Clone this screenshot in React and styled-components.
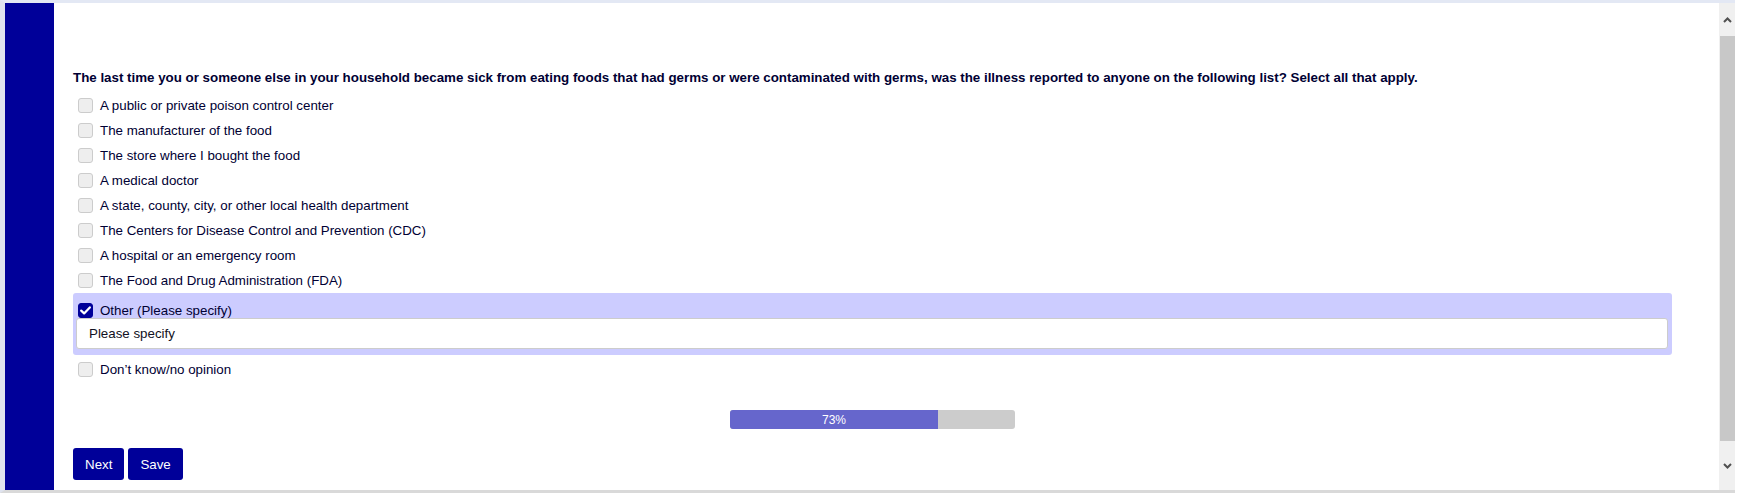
import React from "react";
import styled, { createGlobalStyle } from "styled-components";

const Global = createGlobalStyle`
  html, body { margin: 0; padding: 0; background: #ffffff; }
  body { font-family: "Liberation Sans", Arial, sans-serif; }
  * { box-sizing: border-box; }
`;

const Frame = styled.div`
  width: 1735px;
  height: 493px;
  border-left: 5px solid #dfe3ef;
  border-top: 3px solid #e3e8f4;
  border-bottom: 3px solid #d9d9d9;
  display: flex;
  background: #ffffff;
`;

const Sidebar = styled.div`
  width: 49px;
  flex: none;
  background: #000099;
`;

const Content = styled.div`
  flex: 1;
  min-width: 0;
  padding: 67px 47px 10px 19px;
  display: flex;
  flex-direction: column;
`;

const Question = styled.div`
  font-size: 13.33px;
  line-height: 15px;
  font-weight: bold;
  color: #000033;
  margin-bottom: 8px;
`;

const Options = styled.div`
  display: flex;
  flex-direction: column;
`;

const Row = styled.label`
  display: flex;
  align-items: center;
  height: 25px;
  padding-left: 5px;
  font-size: 13.33px;
  color: #000033;
  cursor: pointer;
`;

const Box = styled.span`
  width: 15px;
  height: 15px;
  flex: none;
  border-radius: 3px;
  border: 1px solid ${(p) => (p.$checked ? "#000099" : "#cccccc")};
  background: ${(p) => (p.$checked ? "#000099" : "#eeeeee")};
  margin-right: 7px;
  display: flex;
  align-items: center;
  justify-content: center;
`;

const Highlight = styled.div`
  background: #ccccff;
  border-radius: 3px;
  padding: 10px 4px 6px 3px;
  margin-bottom: 2px;
`;

const HiRow = styled.label`
  display: flex;
  align-items: center;
  height: 15px;
  padding-left: 2px;
  font-size: 13.33px;
  color: #000033;
`;

const SpecifyInput = styled.input`
  display: block;
  width: 100%;
  height: 31px;
  border: 1px solid #cccccc;
  border-radius: 3px;
  background: #ffffff;
  padding: 0 12px;
  font-family: "Liberation Sans", Arial, sans-serif;
  font-size: 13.33px;
  color: #000033;
  outline: none;
  &::placeholder { color: #111122; opacity: 1; }
`;

const ProgressWrap = styled.div`
  display: flex;
  justify-content: center;
  margin-top: 28px;
`;

const Track = styled.div`
  width: 285px;
  height: 19px;
  background: #cccccc;
  border-radius: 3px;
  overflow: hidden;
  display: flex;
`;

const Fill = styled.div`
  height: 100%;
  background: #6666cc;
  color: #ffffff;
  font-size: 12px;
  display: flex;
  align-items: center;
  justify-content: center;
`;

const Buttons = styled.div`
  display: flex;
  gap: 4px;
  margin-top: 19px;
`;

const Button = styled.button`
  height: 32px;
  padding: 0 12px;
  border: none;
  border-radius: 3px;
  background: #000099;
  color: #ffffff;
  font-family: "Liberation Sans", Arial, sans-serif;
  font-size: 13.33px;
  cursor: pointer;
`;

const Scrollbar = styled.div`
  width: 16px;
  flex: none;
  background: #f0f0f0;
  display: flex;
  flex-direction: column;
  align-items: stretch;
`;

const Arrow = styled.div`
  height: ${(p) => p.$h}px;
  display: flex;
  align-items: center;
  justify-content: center;
  flex: none;
`;

const Thumb = styled.div`
  height: 405px;
  margin-left: 1px;
  background: #c8c8c8;
  flex: none;
`;

const Spacer = styled.div`
  flex: 1;
  display: flex;
  align-items: center;
  justify-content: center;
`;

const Check = () => (
  <svg width="11" height="9" viewBox="0 0 11 9">
    <path d="M1.2 4.6 L4.1 7.4 L9.8 1.4" fill="none" stroke="#ffffff" strokeWidth="2.2" strokeLinecap="round" strokeLinejoin="round" />
  </svg>
);

const Chevron = ({ down }) => (
  <svg width="9" height="6" viewBox="0 0 9 6">
    <path d={down ? "M1 1 L4.5 4.5 L8 1" : "M1 5 L4.5 1.5 L8 5"} fill="none" stroke="#505050" strokeWidth="2" />
  </svg>
);

const options = [
  "A public or private poison control center",
  "The manufacturer of the food",
  "The store where I bought the food",
  "A medical doctor",
  "A state, county, city, or other local health department",
  "The Centers for Disease Control and Prevention (CDC)",
  "A hospital or an emergency room",
  "The Food and Drug Administration (FDA)",
];

export default function App() {
  const progress = 73;
  return (
    <>
      <Global />
      <Frame>
        <Sidebar />
        <Content>
          <Question>
            The last time you or someone else in your household became sick from eating foods that had germs or were contaminated with germs, was the illness reported to anyone on the following list? Select all that apply.
          </Question>
          <Options>
            {options.map((o) => (
              <Row key={o}>
                <Box />
                {o}
              </Row>
            ))}
            <Highlight>
              <HiRow>
                <Box $checked>
                  <Check />
                </Box>
                Other (Please specify)
              </HiRow>
              <SpecifyInput placeholder="Please specify" />
            </Highlight>
            <Row>
              <Box />
              Don’t know/no opinion
            </Row>
          </Options>
          <ProgressWrap>
            <Track>
              <Fill style={{ width: `${progress}%` }}>{progress}%</Fill>
            </Track>
          </ProgressWrap>
          <Buttons>
            <Button>Next</Button>
            <Button>Save</Button>
          </Buttons>
        </Content>
        <Scrollbar>
          <Arrow $h={33}>
            <Chevron />
          </Arrow>
          <Thumb />
          <Spacer>
            <Chevron down />
          </Spacer>
        </Scrollbar>
      </Frame>
    </>
  );
}
